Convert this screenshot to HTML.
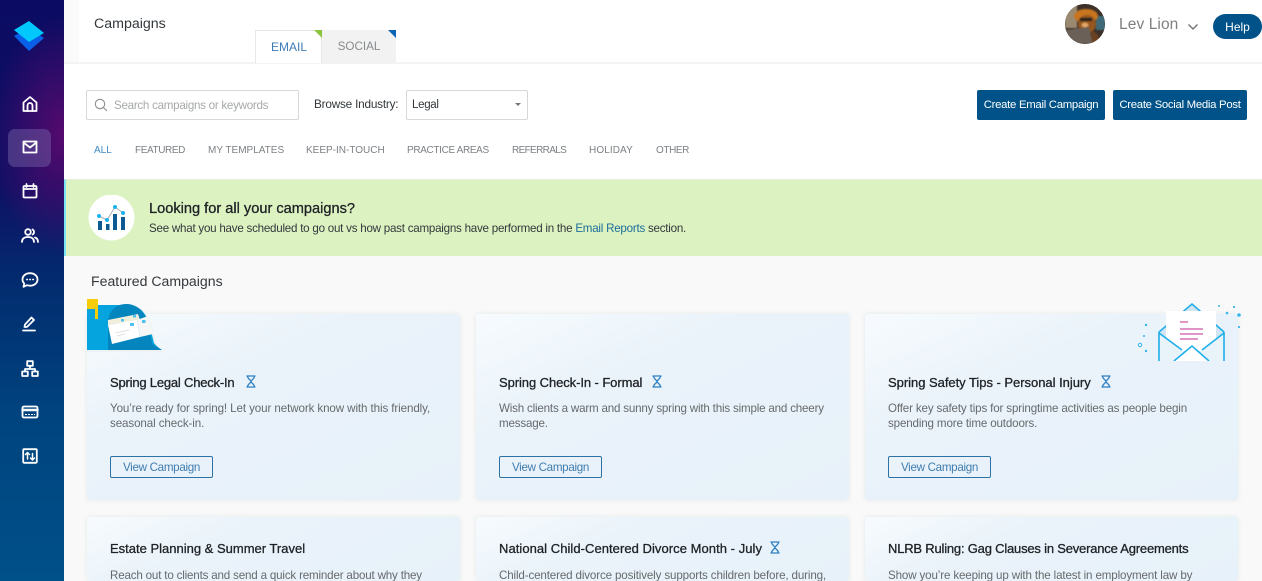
<!DOCTYPE html>
<html lang="en">
<head>
<meta charset="utf-8">
<title>Campaigns</title>
<style>
*{box-sizing:border-box;margin:0;padding:0}
html,body{width:1262px;height:581px;overflow:hidden;background:#f9f9f9;font-family:"Liberation Sans",Arial,sans-serif;color:#333}
#page{position:absolute;left:0;top:0;width:1262px;height:581px;overflow:hidden;background:#f9f9f9}
.abs,.t{position:absolute}
.t{white-space:nowrap;line-height:1}
#side{position:absolute;left:0;top:0;width:64px;height:581px;background:radial-gradient(ellipse 75px 120px at 64px 135px,#560a6e 0%,rgba(86,10,110,0) 100%),linear-gradient(180deg,#0b0b63 0,#0e1064 32%,#022e70 50%,#00447f 72%,#00508a 100%)}
#side svg{position:absolute;fill:none;stroke:#fff;stroke-width:1.8;stroke-linejoin:round;stroke-linecap:round}
#active{position:absolute;left:8px;top:129px;width:43px;height:38px;border-radius:7px;background:rgba(125,110,175,.42)}
#head{position:absolute;left:64px;top:0;width:1198px;height:179px;background:#fff}
#strip{position:absolute;left:64px;top:0;width:15px;height:62px;background:#fafafa}
#headline{position:absolute;left:64px;top:62px;width:1198px;height:2px;background:#f2f3f3}
.tab{position:absolute;top:30px;height:33px;text-align:center;font-size:12px;line-height:33px}
.corner{position:absolute;right:0;top:0;width:0;height:0;border-style:solid;border-width:0 8px 8px 0}
.tag{position:absolute;top:146px;font-size:10px;color:#7d8184;line-height:10px;white-space:nowrap}
.field{position:absolute;background:#fff;border:1px solid #d5d8da;border-radius:2px}
.btn{position:absolute;top:90px;height:30px;background:#005288;color:#fff;border-radius:2px;font-size:11.4px;letter-spacing:-.3px;line-height:31px;text-align:center;white-space:nowrap}
#banner{position:absolute;left:64px;top:179px;width:1198px;height:77px;background:#dcf2c1;border-top:1px solid #e5eee0;border-left:2px solid #7fe3f4}
.card{position:absolute;width:373px;height:186px;border-radius:3px;background:linear-gradient(155deg,#f7fbfe 0%,#eaf3fa 35%,#e7f1f9 100%);box-shadow:0 0 5px rgba(190,200,205,.35)}
.card h3{position:absolute;left:23px;top:62px;font-size:13px;line-height:14px;font-weight:400;color:#1e2225;white-space:nowrap;-webkit-text-stroke:.3px #1e2225}
.card p{position:absolute;left:23px;top:87px;font-size:11.6px;line-height:15px;color:#666a6d;white-space:nowrap}
.view{position:absolute;left:23px;top:142px;width:103px;height:22px;border:1px solid #2d72a5;border-radius:2px;color:#3f7cb0;font-size:11.6px;letter-spacing:-.3px;line-height:22px;text-align:center;white-space:nowrap}
.hg{position:absolute;width:10px;height:13px}
</style>
</head>
<body>
<div id="page">
<div id="side">
  <svg style="left:14px;top:20px;stroke:none" width="32" height="32" viewBox="0 0 32 32"><path d="M0 16 15 8 30 18 15 31Z" fill="#0a5fe8" stroke="none"/><path d="M0 10 15 1 30 13 15 22Z" fill="#00c8fc" stroke="none"/></svg>
  <svg style="left:22px;top:96px" width="16" height="16" viewBox="0 0 16 16"><path d="M1.500 15V6.500L8 1l6.500 5.500V15Z"/><path d="M5.500 15V9.500a2.500 2.500 0 0 1 5 0V15"/></svg>
  <div id="active"></div>
  <svg style="left:22px;top:140px" width="16" height="14" viewBox="0 0 16 14"><rect x="1.500" y="1.500" width="13" height="11"/><path d="M1.500 2.500 8 7.500l6.500-5"/></svg>
  <svg style="left:22px;top:183px" width="16" height="16" viewBox="0 0 16 16"><rect x="1.500" y="3" width="13" height="11.500" rx="1"/><path d="M1.500 6h13M4.500 1v3M11.500 1v3"/></svg>
  <svg style="left:21px;top:228px" width="18" height="16" viewBox="0 0 18 16"><circle cx="7" cy="4" r="2.800"/><path d="M1 14c0-3.500 2.500-5 6-5s6 1.500 6 5M11.500 1.500a2.800 2.800 0 0 1 0 5M14 9.500c2 .7 3 2.200 3 4.500"/></svg>
  <svg style="left:21px;top:272px" width="18" height="16" viewBox="0 0 18 16"><path d="M9 1.200c4.300 0 7.500 2.700 7.500 6.300S13.300 13.700 9 13.700c-1 0-2-.2-2.900-.5L2.500 14.800l.8-3.300C2 10.400 1.500 9 1.500 7.500 1.500 3.900 4.700 1.200 9 1.200Z"/><path d="M6 7.500h.2M9 7.500h.2M12 7.500h.2"/></svg>
  <svg style="left:22px;top:316px" width="16" height="16" viewBox="0 0 16 16"><path d="M2.500 11 3 8.500 9.500 1.500 12 4 5.200 10.800Z"/><path d="M1 14.500h12"/></svg>
  <svg style="left:21px;top:360px" width="18" height="17" viewBox="0 0 18 17"><rect x="6.200" y="1.200" width="5.600" height="4.600"/><rect x="1.200" y="11.500" width="5.600" height="4.500"/><rect x="11.200" y="11.500" width="5.600" height="4.500"/><path d="M9 6v3M4 11.500V9h10v2.500"/></svg>
  <svg style="left:21px;top:405px" width="18" height="14" viewBox="0 0 18 14"><rect x="1.500" y="1.500" width="15" height="11" rx="1.500"/><path d="M1.500 5h15" stroke-width="2.400"/><path d="M4 9.500h10" stroke-width="1" stroke-dasharray="2 1" stroke-linecap="butt"/></svg>
  <svg style="left:22px;top:448px" width="16" height="16" viewBox="0 0 16 16"><rect x="1.200" y="1.200" width="13.600" height="13.600" rx="1"/><path d="M5.500 11V5M3.500 6.500l2-2 2 2M10.500 5.500v6M8.500 10l2 2 2-2" stroke-width="1.500"/></svg>
</div>

<div id="head"></div>
<div id="strip"></div>
<div id="headline"></div>
<div class="t" style="left:94px;top:17px;font-size:14.200px;color:#33383c">Campaigns</div>

<div class="tab" style="left:255px;width:67px;background:#fff;border:1px solid #e6e9ea;border-bottom:none;color:#3f7cb5;padding-left:1px">EMAIL<span class="corner" style="right:-1px;top:-1px;border-color:transparent #8cc63f transparent transparent"></span></div>
<div class="tab" style="left:322px;width:74px;background:#f2f2f2;color:#888b8d;font-size:11.700px">SOCIAL<span class="corner" style="border-color:transparent #0a66b2 transparent transparent"></span></div>

<div class="abs" style="left:1065px;top:4px;width:40px;height:40px;border-radius:50%;overflow:hidden;background:#3a3029">
  <svg width="40" height="40" viewBox="0 0 40 40" style="filter:blur(.7px)"><rect width="40" height="40" fill="#3c3028"/><rect x="0" y="0" width="12" height="24" fill="#9a8a72"/><rect x="31" y="12" width="9" height="14" fill="#3f6a78"/><ellipse cx="21" cy="12" rx="12" ry="7" fill="#c8751f"/><ellipse cx="22" cy="20" rx="9" ry="9" fill="#96561f"/><rect x="15" y="14" width="12" height="3" fill="#2a221c"/><ellipse cx="20" cy="21" rx="3.500" ry="2.500" fill="#e0a868"/><path d="M0 26 24 23 28 40H0Z" fill="#6a6058"/><path d="M26 27c5 0 8 4 9 13H27Z" fill="#6b4020"/></svg>
</div>
<div class="t" style="left:1119px;top:17px;font-size:15.500px;letter-spacing:.1px;color:#7d7f81">Lev Lion</div>
<svg class="abs" style="left:1187px;top:23px" width="12" height="8" viewBox="0 0 12 8"><path d="M1.500 1.500 6 6l4.500-4.500" fill="none" stroke="#777" stroke-width="1.500"/></svg>
<div class="abs" style="left:1213px;top:14px;width:49px;height:25px;background:#005288;border-radius:13px;color:#fff;font-size:12px;line-height:27px;text-align:center">Help</div>

<div class="field" style="left:86px;top:90px;width:213px;height:30px"></div>
<svg class="abs" style="left:94px;top:98px" width="14" height="14" viewBox="0 0 14 14"><circle cx="6" cy="6" r="4.700" fill="none" stroke="#8c9093" stroke-width="1.100"/><path d="M9.500 9.500 13 13" stroke="#8c9093" stroke-width="1.100"/></svg>
<div class="t" style="left:114px;top:100px;font-size:11.600px;letter-spacing:-.27px;color:#a6a9ab">Search campaigns or keywords</div>
<div class="t" style="left:314px;top:99px;font-size:11.800px;letter-spacing:-.22px;color:#33383c">Browse Industry:</div>
<div class="field" style="left:406px;top:90px;width:122px;height:30px"></div>
<div class="t" style="left:412px;top:100px;font-size:11.500px;letter-spacing:-.3px;color:#33383c">Legal</div>
<div class="abs" style="left:515px;top:103px;width:0;height:0;border-style:solid;border-width:3px 3px 0 3px;border-color:#777 transparent transparent transparent"></div>

<div class="btn" style="left:977px;width:128px">Create Email Campaign</div>
<div class="btn" style="left:1113px;width:134px">Create Social Media Post</div>

<div class="tag" style="left:94px;color:#3f8bc4">ALL</div>
<div class="tag" style="left:135px;letter-spacing:-.4px">FEATURED</div>
<div class="tag" style="left:208px">MY TEMPLATES</div>
<div class="tag" style="left:306px">KEEP-IN-TOUCH</div>
<div class="tag" style="left:407px;letter-spacing:-.35px">PRACTICE AREAS</div>
<div class="tag" style="left:512px;letter-spacing:-.65px">REFERRALS</div>
<div class="tag" style="left:589px;letter-spacing:.1px">HOLIDAY</div>
<div class="tag" style="left:656px;letter-spacing:-.4px">OTHER</div>

<div id="banner"></div>
<svg class="abs" style="left:88px;top:195px" width="47" height="47" viewBox="0 0 47 47"><circle cx="23.500" cy="22.500" r="23" fill="#fff"/><path d="M11 21 19 25 27 12 35 18" fill="none" stroke="#a5acb2" stroke-width="1"/><g fill="#0d5a92"><rect x="10" y="26" width="4" height="9"/><rect x="18" y="29" width="3.500" height="6"/><rect x="25" y="19" width="4" height="16"/><rect x="33" y="22" width="4" height="13"/></g><g fill="#17b2f0"><circle cx="11" cy="21" r="2"/><circle cx="19" cy="25" r="2"/><circle cx="27" cy="12" r="2"/><circle cx="35" cy="18" r="2"/></g></svg>
<div class="t" style="left:149px;top:202px;font-size:14.600px;color:#1e2225;-webkit-text-stroke:.3px #1e2225">Looking for all your campaigns?</div>
<div class="t" style="left:149px;top:223px;font-size:11.600px;letter-spacing:-.24px;color:#33383c">See what you have scheduled to go out vs how past campaigns have performed in the <span style="color:#1c6c9c">Email Reports</span> section.</div>

<div class="t" style="left:91px;top:274px;font-size:14.100px;color:#33383c">Featured Campaigns</div>

<div class="card" style="left:87px;top:314px"><h3 style="letter-spacing:-.2px">Spring Legal Check-In</h3><p style="letter-spacing:-.1px">You’re ready for spring! Let your network know with this friendly,<br>seasonal check-in.</p><div class="view">View Campaign</div></div>
<div class="card" style="left:476px;top:314px"><h3 style="letter-spacing:-.08px">Spring Check-In - Formal</h3><p style="letter-spacing:-.19px">Wish clients a warm and sunny spring with this simple and cheery<br>message.</p><div class="view">View Campaign</div></div>
<div class="card" style="left:865px;top:314px"><h3 style="letter-spacing:-.03px">Spring Safety Tips - Personal Injury</h3><p style="letter-spacing:-.15px">Offer key safety tips for springtime activities as people begin<br>spending more time outdoors.</p><div class="view">View Campaign</div></div>
<div class="card" style="left:87px;top:517px;height:64px"><h3 style="top:25px">Estate Planning &amp; Summer Travel</h3><p style="top:51px;letter-spacing:-.18px">Reach out to clients and send a quick reminder about why they</p></div>
<div class="card" style="left:476px;top:517px;height:64px"><h3 style="top:25px;letter-spacing:.05px">National Child-Centered Divorce Month - July</h3><p style="top:51px;letter-spacing:-.14px">Child-centered divorce positively supports children before, during,</p></div>
<div class="card" style="left:865px;top:517px;height:64px"><h3 style="top:25px;letter-spacing:-.2px">NLRB Ruling: Gag Clauses in Severance Agreements</h3><p style="top:51px;letter-spacing:-.14px">Show you’re keeping up with the latest in employment law by</p></div>

<svg class="hg" style="left:246px;top:375px" viewBox="0 0 10 13"><path d="M.5 1h9M.5 12h9M1.500 1c0 3 3.500 4 3.500 5.500S1.500 9 1.500 12M8.500 1C8.500 4 5 5 5 6.500S8.500 9 8.500 12" fill="none" stroke="#2d7fc1" stroke-width="1.300"/></svg>
<svg class="hg" style="left:652px;top:375px" viewBox="0 0 10 13"><path d="M.5 1h9M.5 12h9M1.500 1c0 3 3.500 4 3.500 5.500S1.500 9 1.500 12M8.500 1C8.500 4 5 5 5 6.500S8.500 9 8.500 12" fill="none" stroke="#2d7fc1" stroke-width="1.300"/></svg>
<svg class="hg" style="left:1101px;top:375px" viewBox="0 0 10 13"><path d="M.5 1h9M.5 12h9M1.500 1c0 3 3.500 4 3.500 5.500S1.500 9 1.500 12M8.500 1C8.500 4 5 5 5 6.500S8.500 9 8.500 12" fill="none" stroke="#2d7fc1" stroke-width="1.300"/></svg>
<svg class="hg" style="left:770px;top:541px" viewBox="0 0 10 13"><path d="M.5 1h9M.5 12h9M1.500 1c0 3 3.500 4 3.500 5.500S1.500 9 1.500 12M8.500 1C8.500 4 5 5 5 6.500S8.500 9 8.500 12" fill="none" stroke="#2d7fc1" stroke-width="1.300"/></svg>

<svg class="abs" style="left:87px;top:297px" width="78" height="58" viewBox="0 0 78 58">
  <path d="M0 8H42C56 8 64 20 66 34L69 46Q71 50 77 55H0Z" fill="#eef2f4"/>
  <path d="M0 8H42C54 8 62 20 64 34L67 46Q69 49 75 53H0Z" fill="#06a4de"/>
  <path d="M21 53V26C21 14 29 7 39 7C50 7 59 15 62 30L65 46Q67 49 75 53Z" fill="#0585bd"/>
  <rect x="0" y="2" width="11" height="10" fill="#f7cc08"/><rect x="8" y="2" width="3" height="20" fill="#f7cc08"/>
  <path d="M21 23 51 17 53 23 21 28Z" fill="#f1eedc"/>
  <path d="M21 28 50 23 53 40 25 47Z" fill="#fff"/>
  <path d="M50 23 61 19 66 37 53 40Z" fill="#f6f6f6"/>
  <rect x="34" y="22" width="3" height="2.500" fill="#4fc1ef"/><rect x="46" y="18" width="3" height="2.500" fill="#4fc1ef"/><rect x="43" y="26" width="4" height="3" fill="#4fc1ef"/><rect x="55" y="23" width="3.500" height="3" fill="#4fc1ef"/>
  <path d="M29 36 42 33M30 39 38 37" stroke="#d4d8da" stroke-width=".8"/>
</svg>

<svg class="abs" style="left:1130px;top:298px" width="116" height="63" viewBox="0 0 116 63">
  <path d="M29 34 62 6 94 34V63H29Z" fill="#d2e5f2"/>
  <path d="M29 34 62 6 94 34" fill="none" stroke="#1fafe9" stroke-width="1.600"/>
  <rect x="36" y="13" width="50" height="40" fill="#fff"/>
  <path d="M29 35 62 60 94 35V63H29Z" fill="#e9f3fa"/>
  <path d="M29 35 52 52M94 35 72 52" stroke="#1fafe9" stroke-width="1.600" fill="none"/>
  <path d="M29 34V63M94 34V63" stroke="#1fafe9" stroke-width="1.600" fill="none"/>
  <path d="M44 63 62 48 79 63Z" fill="#fff"/>
  <path d="M44 63 62 48 79 63" fill="none" stroke="#1fafe9" stroke-width="1.600"/>
  <g stroke="#d770b6" stroke-width="1.500"><path d="M50 24h8M50 31h23M50 36h23M50 41h18"/></g>
  <g fill="#37b6ec"><circle cx="16" cy="27" r="1.200"/><circle cx="14" cy="38" r="1"/><circle cx="16" cy="53" r="1.200"/><circle cx="89" cy="8" r="1"/><circle cx="97" cy="15" r="1.300"/><circle cx="104" cy="9" r="1.100"/><circle cx="109" cy="17" r="1.800"/><circle cx="109" cy="29" r="1.100"/></g>
  <circle cx="10" cy="47" r="1.700" fill="none" stroke="#37b6ec" stroke-width="1"/>
</svg>
</div>
</body>
</html>
